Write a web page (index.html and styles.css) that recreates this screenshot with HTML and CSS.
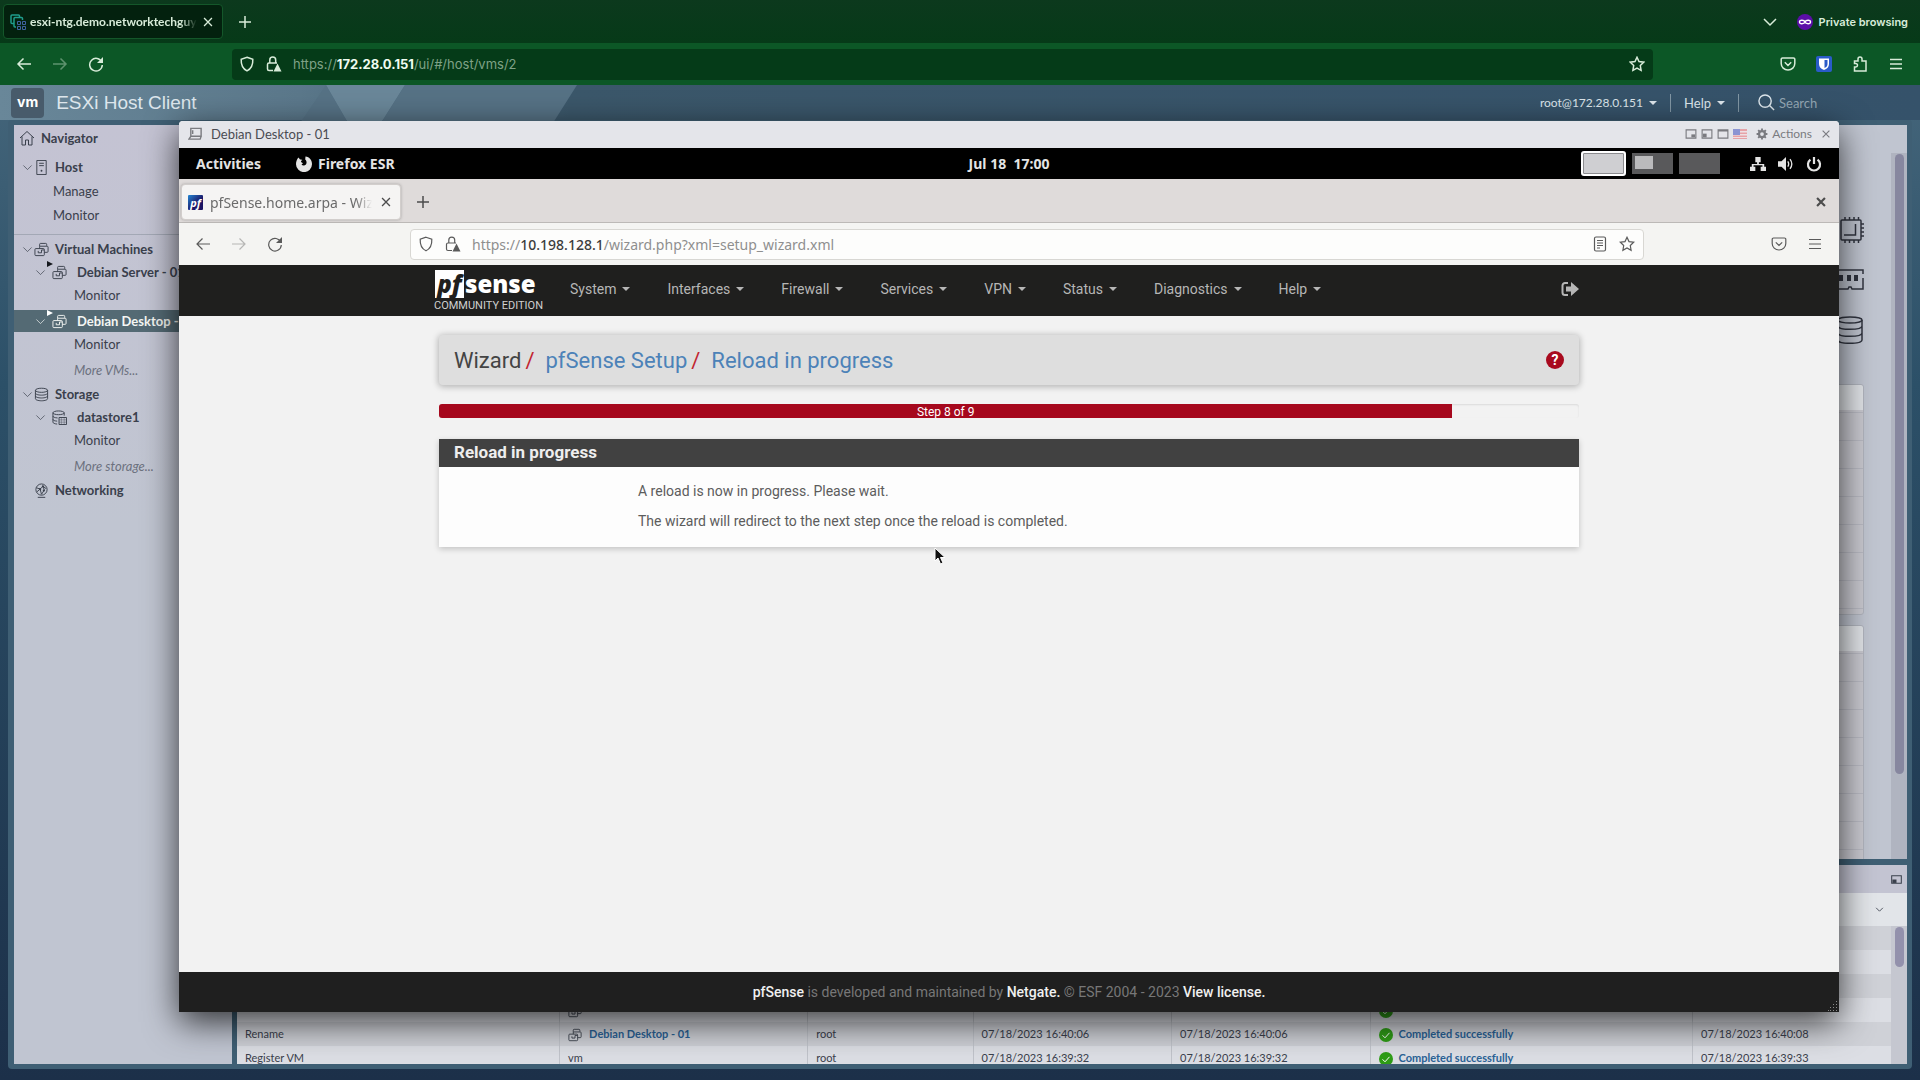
FILE: index.html
```html
<!DOCTYPE html>
<html lang="en">
<head>
    <meta charset="UTF-8">
    <meta name="viewport" content="width=device-width, initial-scale=1.0">
    <title>ESXi Host Client</title>
    <link rel="stylesheet" href="styles.css">
</head>
<body>

    <!-- Shared icons -->
    <svg class="sprite" aria-hidden="true">
        <symbol id="i-back" viewBox="0 0 16 16"><path d="M15 8H2M7.500 2.500L2 8l5.500 5.500"/></symbol>
        <symbol id="i-forward" viewBox="0 0 16 16"><path d="M1 8h13M8.500 2.500L14 8l-5.500 5.500"/></symbol>
        <symbol id="i-reload" viewBox="0 0 16 16"><path d="M13.800 6.200A6.300 6.300 0 1 0 14.300 9"/><path class="solid" d="M15 1v6H9z"/></symbol>
        <symbol id="i-shield" viewBox="0 0 16 16"><path d="M8 1.200l5.800 2c.3 5.600-1.500 9.500-5.800 11.600C3.700 12.700 1.900 8.800 2.200 3.200z"/></symbol>
        <symbol id="i-lock" viewBox="0 0 16 16"><path d="M7 14.500H3a1.500 1.500 0 0 1-1.500-1.500V8.500A1.500 1.500 0 0 1 3 7h8M3.800 7V4a2.900 2.900 0 0 1 5.900 0v3"/><path class="solid" d="M11.500 7.500l4 8h-8z"/></symbol>
        <symbol id="i-star" viewBox="0 0 16 16"><path d="M8 1.300l2 4.300 4.700.6-3.400 3.300.8 4.800L8 12l-4.100 2.300.8-4.800L1.300 6.200l4.700-.6z"/></symbol>
        <symbol id="i-pocket" viewBox="0 0 16 16"><path d="M2.500 2h11a1.300 1.300 0 0 1 1.300 1.300V7.500a6.800 6.500 0 0 1-13.600 0V3.300A1.300 1.300 0 0 1 2.500 2zM4.800 6.300L8 9.500l3.200-3.200"/></symbol>
        <symbol id="i-menu" viewBox="0 0 16 16"><path d="M2 3.500h12M2 8h12M2 12.500h12"/></symbol>
        <symbol id="i-close" viewBox="0 0 16 16"><path d="M3.500 3.500l9 9M12.500 3.500l-9 9"/></symbol>
        <symbol id="i-plus" viewBox="0 0 16 16"><path d="M8 2v12M2 8h12"/></symbol>
        <symbol id="i-down" viewBox="0 0 16 16"><path d="M2 5l6 6 6-6"/></symbol>
        <symbol id="i-puzzle" viewBox="0 0 16 16"><path d="M2.500 15V11h1.300a1.700 1.700 0 0 0 0-3.400H2.500V5H6V3a2 2 0 0 1 4 0v2h4v10z"/></symbol>
        <symbol id="i-vm" viewBox="0 0 16 16"><path d="M6 5V2.500A1 1 0 0 1 7 1.500h5.500a1 1 0 0 1 1 1V4M11 11h3a1 1 0 0 0 1-1V5.500a1 1 0 0 0-1-1H7a1 1 0 0 0-1 1V7M2 7h8a1 1 0 0 1 1 1v5.500a1 1 0 0 1-1 1H2a1 1 0 0 1-1-1V8a1 1 0 0 1 1-1zM4.500 11.500v-2M4.500 11.500H8V8.500h3"/></symbol>
        <symbol id="i-disk" viewBox="0 0 16 16"><ellipse cx="8" cy="3.500" rx="6.500" ry="2.200"/><path d="M1.500 3.500v9c0 1.200 2.900 2.200 6.500 2.200s6.500-1 6.500-2.200v-9M1.500 6.500c0 1.200 2.900 2.200 6.500 2.200s6.500-1 6.500-2.200M1.500 9.500c0 1.200 2.900 2.200 6.500 2.200s6.500-1 6.500-2.200"/></symbol>
        <symbol id="i-ok" viewBox="0 0 14 14"><circle class="ok-disc" cx="7" cy="7" r="7"/><path class="ok-tick" d="M3.500 7.300l2.500 2.500 4.500-5"/></symbol>
    </svg>

    <!-- Host browser -->
    <header class="browser">
        <div class="tab-strip">
            <div class="tab">
                <svg class="icon" viewBox="0 0 16 16"><path class="teal" d="M4 9.500H2a1 1 0 0 1-1-1V2a1 1 0 0 1 1-1h6.500a1 1 0 0 1 1 1v1M6 13H5a1 1 0 0 1-1-1V4.500a1 1 0 0 1 1-1h6.500a1 1 0 0 1 1 1V6"/><path class="blue" d="M7.500 7.500h3v3h-3zM12.500 7.500h3v3h-3zM7.500 12.500h3v3h-3zM12.500 12.500h3v3h-3z"/></svg>
                <span class="tab-title">esxi-ntg.demo.networktechguy.</span>
                <button type="button" aria-label="Close tab"><svg class="icon"><use href="#i-close"/></svg></button>
            </div>
            <button type="button" class="new-tab" aria-label="New tab"><svg class="icon"><use href="#i-plus"/></svg></button>
            <div class="private">
                <button type="button" aria-label="List all tabs"><svg class="icon"><use href="#i-down"/></svg></button>
                <svg class="mask" viewBox="0 0 16 16"><circle cx="8" cy="8" r="8"/><path d="M8 8c-1-2-5.500-2.400-5.500 0S7 10 8 8c1 2 5.500 2.400 5.500 0S9 6 8 8z"/></svg>
                <span>Private browsing</span>
            </div>
        </div>
        <div class="toolbar">
            <div class="nav-buttons">
                <button type="button" aria-label="Back"><svg class="icon"><use href="#i-back"/></svg></button>
                <button type="button" class="dim" aria-label="Forward"><svg class="icon"><use href="#i-forward"/></svg></button>
                <button type="button" aria-label="Reload"><svg class="icon"><use href="#i-reload"/></svg></button>
            </div>
            <div class="address">
                <svg class="icon"><use href="#i-shield"/></svg>
                <svg class="icon"><use href="#i-lock"/></svg>
                <div class="url" role="textbox" aria-label="Address">https://<b>172.28.0.151</b>/ui/#/host/vms/2</div>
                <button type="button" aria-label="Bookmark"><svg class="icon"><use href="#i-star"/></svg></button>
            </div>
            <div class="tool-buttons">
                <button type="button" aria-label="Pocket"><svg class="icon"><use href="#i-pocket"/></svg></button>
                <button type="button" aria-label="Bitwarden"><svg class="icon" viewBox="0 0 16 16"><rect class="bw-box" width="16" height="16" rx="2"/><path class="bw-shield" d="M3 2.500h10V8c0 3-2 4.700-5 6-3-1.300-5-3-5-6z"/><path class="bw-half" d="M8.500 4H11.500v4c0 2-1 3-3 4z"/></svg></button>
                <button type="button" aria-label="Extensions"><svg class="icon"><use href="#i-puzzle"/></svg></button>
                <button type="button" aria-label="Menu"><svg class="icon"><use href="#i-menu"/></svg></button>
            </div>
        </div>
    </header>

    <div class="esxi">
        <div class="esxi-header">
            <svg class="facets" viewBox="0 0 640 38" aria-hidden="true"><path class="facet-light" d="M326 0h79l-24 38h-33z"/><path class="facet-mid" d="M326 0l22 38h-48zM405 0h172l-24 38H381z"/></svg>
            <span class="vm-logo">vm</span>
            <h1>ESXi Host Client</h1>
            <button type="button" class="caret user">root@172.28.0.151</button>
            <button type="button" class="caret">Help</button>
            <label class="search">
                <svg viewBox="0 0 18 18"><circle cx="7.500" cy="7.500" r="6.500"/><path d="M12 12l5 5"/></svg>
                <input type="search" placeholder="Search" aria-label="Search">
            </label>
        </div>

        <div class="workspace">
            <nav class="navigator">
                <h2><svg class="icon" viewBox="0 0 16 16"><path d="M1 8l7-6.500L15 8M3 6.500v8.500h3.500v-5h3v5H13V6.500"/></svg>Navigator</h2>
                <ul>
                    <li class="node"><svg class="arrow"><use href="#i-down"/></svg><svg class="icon" viewBox="0 0 16 16"><path d="M3 .5h10v15H3zM5.500 3.500h5M5.500 6h5"/><circle class="solid" cx="8" cy="11.500" r="1"/></svg>Host</li>
                    <li class="leaf">Manage</li>
                    <li class="leaf">Monitor</li>
                </ul>
                <ul class="divided">
                    <li class="node"><svg class="arrow"><use href="#i-down"/></svg><svg class="icon"><use href="#i-vm"/></svg>Virtual Machines</li>
                    <li class="node sub running"><svg class="arrow"><use href="#i-down"/></svg><svg class="icon"><use href="#i-vm"/></svg>Debian Server - 01</li>
                    <li class="leaf sub">Monitor</li>
                    <li class="node sub running selected"><svg class="arrow"><use href="#i-down"/></svg><svg class="icon"><use href="#i-vm"/></svg>Debian Desktop - 01</li>
                    <li class="leaf sub">Monitor</li>
                    <li class="leaf sub more">More VMs...</li>
                    <li class="node"><svg class="arrow"><use href="#i-down"/></svg><svg class="icon"><use href="#i-disk"/></svg>Storage</li>
                    <li class="node sub"><svg class="arrow"><use href="#i-down"/></svg><svg class="icon" viewBox="0 0 16 16"><ellipse cx="7" cy="3" rx="6" ry="2"/><path d="M1 3v10c0 1 2 1.800 4.500 2M1 6.500c0 1 2 1.800 5 2M1 10c0 1 2 1.700 4.500 1.900M13 3v3M7.500 8h8v7.500h-8z"/><path class="grid-lines" d="M10 8v7.500M13 8v7.500M7.500 10.500h8M7.500 13h8"/></svg>datastore1</li>
                    <li class="leaf sub">Monitor</li>
                    <li class="leaf sub more">More storage...</li>
                    <li class="node"><span class="arrow"></span><svg class="icon" viewBox="0 0 16 16"><circle cx="8" cy="7" r="6"/><path d="M4 15.300h8M2.500 5l4 1.500 3-3L13 6M6.500 6.500L8 12l3-4.500-1.500-4M3 9.500l3.500-3"/><circle class="solid" cx="6.500" cy="6.500" r="1.200"/><circle class="solid" cx="10.500" cy="8" r="1.200"/><circle class="solid" cx="9.500" cy="3.500" r="1.200"/></svg>Networking</li>
                </ul>
            </nav>

            <main class="host">
                <section class="summary">
                    <div class="summary-body">
                        <div class="gauges">
                            <svg viewBox="0 0 26 28"><rect x="3" y="4" width="20" height="20" rx="1"/><path d="M17.500 8v11H6M7 1v3M11.500 1v3M16 1v3M20.500 1v3M7 24v3M11.500 24v3M16 24v3M20.500 24v3M23 8h3M23 12h3M23 16h3M23 20h3"/></svg>
                            <svg viewBox="0 0 26 28"><path d="M0 4h25v4M25 12v11H14l-1-2h-2l-1 2H0"/><path class="solid" d="M1 9h4v6H1zM9 9h4v6H9zM16 9h4v6h-4z"/></svg>
                            <svg viewBox="0 0 26 28"><ellipse cx="12" cy="4" rx="12" ry="3"/><path d="M24 4v20c0 2-5 3.300-12 3.300S0 26 0 24V4M24 10c0 2-5 3.300-12 3.300S0 12 0 10M24 17c0 2-5 3.300-12 3.300S0 19 0 17"/></svg>
                        </div>
                        <div class="card"></div>
                        <div class="card tall"></div>
                    </div>
                    <div class="scroll"><div class="thumb"></div></div>
                </section>
                <section class="tasks">
                    <div class="tasks-title">
                        <button type="button" aria-label="Restore"><svg class="icon" viewBox="0 0 16 16"><path d="M1 2.500h14v11H1z"/><path class="solid" d="M2 8h6v5H2z"/></svg></button>
                    </div>
                    <div class="tasks-filter">
                        <button type="button" aria-label="Column options"><svg class="icon"><use href="#i-down"/></svg></button>
                    </div>
                    <div class="tasks-body">
                        <table>
                            <colgroup><col><col class="c-target"><col class="c-init"><col class="c-time"><col class="c-time"><col class="c-result"><col class="c-time"></colgroup>
                            <tbody>
                                <tr><td></td><td></td><td></td><td></td><td></td><td></td><td></td></tr>
                                <tr><td></td><td></td><td></td><td></td><td></td><td></td><td></td></tr>
                                <tr><td></td><td></td><td></td><td></td><td></td><td></td><td></td></tr>
                                <tr><td></td><td><svg class="icon"><use href="#i-vm"/></svg></td><td></td><td></td><td></td><td><svg class="ok"><use href="#i-ok"/></svg></td><td></td></tr>
                                <tr><td>Rename</td><td><svg class="icon"><use href="#i-vm"/></svg><a href="#">Debian Desktop - 01</a></td><td>root</td><td>07/18/2023 16:40:06</td><td>07/18/2023 16:40:06</td><td><svg class="ok"><use href="#i-ok"/></svg><a href="#">Completed successfully</a></td><td>07/18/2023 16:40:08</td></tr>
                                <tr><td>Register VM</td><td>vm</td><td>root</td><td>07/18/2023 16:39:32</td><td>07/18/2023 16:39:32</td><td><svg class="ok"><use href="#i-ok"/></svg><a href="#">Completed successfully</a></td><td>07/18/2023 16:39:33</td></tr>
                            </tbody>
                        </table>
                        <div class="scroll"><div class="thumb"></div></div>
                    </div>
                </section>
            </main>
        </div>
    </div>

    <!-- Remote console window floating over the host client -->
    <div class="console">
        <div class="console-title">
            <svg class="icon" viewBox="0 0 16 16"><path d="M3 2.500h11v8.500H3zM3 11l-2 3h12l1-3M5 4.500v4"/></svg>
            <span class="console-name">Debian Desktop - 01</span>
            <button type="button" aria-label="Dock right"><svg class="icon" viewBox="0 0 16 16"><path d="M1.500 2.500h13v11h-13z"/><path class="solid" d="M8.500 8.500h5v4h-5z"/></svg></button>
            <button type="button" aria-label="Dock left"><svg class="icon" viewBox="0 0 16 16"><path d="M1.500 2.500h13v11h-13z"/><path class="solid" d="M2.500 7.500h5v5h-5z"/></svg></button>
            <button type="button" aria-label="Maximize"><svg class="icon" viewBox="0 0 16 16"><path d="M1.500 2.500h13v11h-13zM1.500 4h13"/></svg></button>
            <button type="button" class="flag" aria-label="Keyboard layout"><svg viewBox="0 0 14 10"><path class="flag-red" d="M0 0h14v10H0z"/><path class="flag-white" d="M0 2h14v1.500H0zM0 5h14v1.500H0zM0 8h14v1H0z"/><path class="flag-blue" d="M0 0h7v6H0z"/></svg></button>
            <button type="button" class="actions"><svg class="icon" viewBox="0 0 16 16"><circle class="gear" cx="8" cy="8" r="4"/><path class="teeth" d="M8 .8v3M8 12.200v3M.8 8h3M12.200 8h3M2.900 2.900L5 5M11 11l2.100 2.100M2.900 13.100L5 11M11 5l2.100-2.100"/></svg>Actions</button>
            <button type="button" aria-label="Close console"><svg class="icon"><use href="#i-close"/></svg></button>
        </div>

        <div class="gnome-bar">
            <div class="gnome-left">
                <button type="button">Activities</button>
                <button type="button"><svg viewBox="0 0 16 16"><path class="solid" d="M2.500 1.500L4 3.500c1-.3 2 0 2.500.6-1 .4-1.500 1-1.500 1.900l2 1.200-1.500 1.300c1 1.500 3.700 1.300 4.700-.5.800-1.600.2-3.500-1-4.500L9.500.5C13.500 1 16 4.200 16 8a8 8 0 0 1-16 .2C0 5.500 1 3 2.500 1.500z"/></svg>Firefox ESR</button>
            </div>
            <time>Jul 18&nbsp; 17:00</time>
            <div class="gnome-right">
                <span class="desk current"></span><span class="desk"><i></i></span><span class="desk"></span>
                <svg viewBox="0 0 18 18"><path class="solid" d="M6 1h6v6h-2v2h6v3h2v5h-6v-5h2v-1.500H4V12h2v5H0v-5h2V9h6V7H6z"/></svg>
                <svg viewBox="0 0 18 18"><path class="solid" d="M0 6h4l5-5v16l-5-5H0z"/><path d="M11 6c1.200 1.800 1.200 4.200 0 6M13.500 3.500c2.600 3.500 2.600 7.500 0 11"/></svg>
                <svg viewBox="0 0 18 18"><path class="power" d="M5 4a6.800 6.800 0 1 0 8 0M9 1v8"/></svg>
            </div>
        </div>

        <div class="guest-tabs">
            <div class="tab">
                <span class="pf-icon">pf</span>
                <span class="tab-title">pfSense.home.arpa - Wiza</span>
                <button type="button" aria-label="Close tab"><svg class="icon"><use href="#i-close"/></svg></button>
            </div>
            <button type="button" class="new-tab" aria-label="New tab"><svg class="icon"><use href="#i-plus"/></svg></button>
            <button type="button" class="quit" aria-label="Close window"><svg class="icon"><use href="#i-close"/></svg></button>
        </div>

        <div class="toolbar guest">
            <div class="nav-buttons">
                <button type="button" aria-label="Back"><svg class="icon"><use href="#i-back"/></svg></button>
                <button type="button" class="dim" aria-label="Forward"><svg class="icon"><use href="#i-forward"/></svg></button>
                <button type="button" aria-label="Reload"><svg class="icon"><use href="#i-reload"/></svg></button>
            </div>
            <div class="address">
                <svg class="icon"><use href="#i-shield"/></svg>
                <svg class="icon"><use href="#i-lock"/></svg>
                <div class="url" role="textbox" aria-label="Address">https://<b>10.198.128.1</b>/wizard.php?xml=setup_wizard.xml</div>
                <button type="button" aria-label="Reader view"><svg class="icon" viewBox="0 0 16 16"><rect x="2.500" y="1" width="11" height="14" rx="1.500"/><path d="M5 4.500h6M5 7h6M5 9.500h6M5 12h3"/></svg></button>
                <button type="button" aria-label="Bookmark"><svg class="icon"><use href="#i-star"/></svg></button>
            </div>
            <div class="tool-buttons">
                <button type="button" aria-label="Pocket"><svg class="icon"><use href="#i-pocket"/></svg></button>
                <button type="button" aria-label="Menu"><svg class="icon"><use href="#i-menu"/></svg></button>
            </div>
        </div>

        <div class="pfsense">
            <nav class="pf-nav">
                <div class="pf-inner">
                    <a href="#" class="pf-logo">
                        <span class="pf-word"><span class="pf-box">pf</span>sense</span>
                        <span class="pf-edition">COMMUNITY EDITION</span>
                    </a>
                    <button type="button" class="caret">System</button>
                    <button type="button" class="caret">Interfaces</button>
                    <button type="button" class="caret">Firewall</button>
                    <button type="button" class="caret">Services</button>
                    <button type="button" class="caret">VPN</button>
                    <button type="button" class="caret">Status</button>
                    <button type="button" class="caret">Diagnostics</button>
                    <button type="button" class="caret">Help</button>
                    <a href="#" class="logout" aria-label="Logout"><svg viewBox="0 0 18 16"><path d="M7 2H4a2.500 2.500 0 0 0-2.500 2.500v7A2.500 2.500 0 0 0 4 14h3"/><path class="solid" d="M5 5.500h5V1l8 7-8 7v-4.500H5z"/></svg></a>
                </div>
            </nav>

            <div class="pf-content">
                <div class="breadcrumb">
                    <span>Wizard</span><i>/</i><a href="#">pfSense Setup</a><i>/</i><a href="#">Reload in progress</a>
                    <a href="#" class="help" aria-label="Help">?</a>
                </div>
                <div class="progress"><div class="progress-bar" style="width: 88.89%">Step 8 of 9</div></div>
                <section class="panel">
                    <h2>Reload in progress</h2>
                    <div class="panel-body">
                        <p>A reload is now in progress. Please wait.</p>
                        <p>The wizard will redirect to the next step once the reload is completed.</p>
                    </div>
                </section>
            </div>

            <footer><a href="#">pfSense</a> is developed and maintained by <a href="#">Netgate.</a> © ESF 2004 - 2023 <a href="#">View license.</a></footer>
        </div>
        <svg class="grip" viewBox="0 0 10 10"><path d="M8 0h1v1H8zM5 3h1v1H5zM8 3h1v1H8zM2 6h1v1H2zM5 6h1v1H5zM8 6h1v1H8zM0 9h1v1H0zM2 9h1v1H2zM5 9h1v1H5zM8 9h1v1H8z"/></svg>
    </div>

    <svg class="pointer" viewBox="0 0 12 18"><path d="M1 1v13l3-3 2.500 6 2.500-1-2.500-5.500H11z"/></svg>

</body>
</html>
```

FILE: styles.css
```css
* {
    box-sizing: border-box;
}

body {
    margin: 0;
    height: 100vh;
    display: flex;
    flex-direction: column;
    overflow: hidden;
    position: relative;
    background: #1c3049;
    font-family: "Lato", sans-serif;
    font-size: 13px;
    color: #3a404c;
}

button {
    display: flex;
    align-items: center;
    padding: 0;
    border: none;
    background: none;
    color: inherit;
    font: inherit;
    cursor: pointer;
}

a {
    color: inherit;
    text-decoration: none;
}

h1, h2, p, ul {
    margin: 0;
    padding: 0;
}

ul {
    list-style: none;
}

svg {
    flex: none;
    fill: none;
    stroke: currentColor;
    stroke-width: 1.5;
}

.solid {
    fill: currentColor;
    stroke: none;
}

.sprite {
    position: absolute;
    width: 0;
    height: 0;
}

.icon {
    width: 16px;
    height: 16px;
}

/* Host browser chrome */
.browser {
    background: #0c5726;
    color: #d8ecd9;
    font-family: "Inter", sans-serif;
}

.tab-strip {
    display: flex;
    align-items: center;
    height: 43px;
    padding: 0 12px 0 3px;
    background: linear-gradient(#0c391d, #063a18);
}

.tab {
    display: flex;
    align-items: center;
    gap: 4px;
    width: 220px;
    height: 35px;
    padding: 0 7px 0 6px;
    border: 1px solid #14572a;
    border-radius: 4px;
    background: #03210e;
}

.tab .teal {
    stroke: #1f9d8c;
}

.tab .blue {
    stroke: #3f62a0;
    stroke-width: 1;
}

.tab-title {
    flex: 1;
    overflow: hidden;
    white-space: nowrap;
    font: 700 12px "Lato", sans-serif;
    -webkit-mask-image: linear-gradient(to right, #000 90%, transparent);
    mask-image: linear-gradient(to right, #000 90%, transparent);
}

.tab button .icon {
    width: 14px;
    height: 14px;
}

.new-tab {
    margin-left: 14px;
}

.private {
    display: flex;
    align-items: center;
    margin-left: auto;
    font-size: 11px;
    font-weight: 600;
}

.mask {
    width: 16px;
    height: 16px;
    margin: 0 6px 0 19px;
    fill: #5b0fa8;
    stroke: none;
}

.mask path {
    fill: none;
    stroke: #fff;
}

.toolbar {
    display: flex;
    align-items: center;
    height: 42px;
}

.nav-buttons {
    display: flex;
    gap: 20px;
    width: 232px;
    padding-left: 16px;
}

.dim {
    opacity: 0.4;
}

.address {
    flex: 1;
    display: flex;
    align-items: center;
    gap: 11px;
    height: 31px;
    padding: 0 8px 0 7px;
    border-radius: 4px;
    background: #053b18;
}

.url {
    flex: 1;
    color: #7fa287;
    font-size: 13px;
}

.url b {
    color: #f0fbf0;
    font-weight: 700;
}

.tool-buttons {
    display: flex;
    justify-content: flex-end;
    gap: 20px;
    width: 267px;
    padding-right: 16px;
}

.bw-box {
    fill: #2a5bc8;
    stroke: none;
}

.bw-shield {
    fill: #fff;
    stroke: none;
}

.bw-half {
    fill: #2a5bc8;
    stroke: none;
}

/* ESXi host client */
.esxi {
    flex: 1;
    display: flex;
    flex-direction: column;
    min-height: 0;
    padding: 0 8px 11px;
    background: linear-gradient(#44657a, #2c5068 30%, #1c3049);
}

.esxi-header {
    position: relative;
    display: flex;
    align-items: center;
    height: 35px;
    margin: 0 -8px;
    padding: 0 67px 0 11px;
    background: linear-gradient(to right, #698799 0, #5b788b 300px, #3b576a 570px, #35526a);
    color: #dde6ec;
    font-size: 13px;
}

.facets {
    position: absolute;
    top: 0;
    left: 0;
    width: 640px;
    height: 38px;
    stroke: none;
}

.facet-light {
    fill: #6a8799;
}

.facet-mid {
    fill: #567285;
}

.vm-logo {
    padding: 5px 6px 7px;
    border-radius: 4px;
    background: #485b6b;
    color: #fff;
    font: 700 14px/18px "Inter", sans-serif;
    position: relative;
}

.esxi-header h1 {
    flex: 1;
    margin-left: 12px;
    position: relative;
    font: 400 19px "Liberation Sans", sans-serif;
}

.caret::after {
    content: "";
    margin-left: 6px;
    border: 4px solid transparent;
    border-top-color: currentColor;
    border-bottom: none;
}

.esxi-header .caret {
    height: 18px;
    padding: 0 13px;
    border-right: 1px solid #8297a5;
}

.esxi-header .user {
    font-size: 12px;
}

.search {
    display: flex;
    align-items: center;
    gap: 4px;
    margin-left: 19px;
}

.search svg {
    width: 17px;
    height: 17px;
}

.search input {
    width: 74px;
    padding: 0;
    border: none;
    background: none;
    color: inherit;
    font: inherit;
}

.search input::placeholder {
    color: #94a7b4;
}

.workspace {
    flex: 1;
    display: grid;
    grid-template-columns: 218px minmax(0, 1fr);
    grid-template-rows: minmax(0, 1fr);
    gap: 5px;
    min-height: 0;
    padding: 5px 5px 5px 6px;
    border-radius: 4px;
    background: #3f5f74;
}

.navigator {
    background: linear-gradient(to bottom, #c4c3d3, #c0c5d1 400px);
    overflow: hidden;
    white-space: nowrap;
}

.navigator h2 {
    display: flex;
    align-items: center;
    gap: 6px;
    height: 30px;
    padding: 0 0 4px 5px;
    font-size: 13px;
    font-weight: 700;
}

.navigator svg {
    stroke-width: 1;
}

.navigator .grid-lines {
    opacity: 0.4;
}

.navigator .divided {
    margin-top: 7px;
    padding-top: 2px;
    border-top: 1px solid #a3a8b5;
}

.node {
    display: flex;
    align-items: center;
    height: 24px;
    padding-left: 8px;
    font-weight: 700;
    font-size: 13px;
}

.arrow {
    width: 11px;
    height: 11px;
    margin-right: 1px;
}

.node .icon {
    width: 15px;
    height: 15px;
    margin-right: 6px;
}

.node.sub {
    position: relative;
    height: 22px;
    padding-left: 21px;
}

.node.sub .icon {
    margin: 0 10px 0 5px;
}

.running::before {
    content: "";
    position: absolute;
    left: 33px;
    top: 0;
    border: 3px solid transparent;
    border-left: 6px solid #15181d;
    border-right: none;
}

.node.selected {
    margin-top: 3px;
    background: #546a74;
    color: #f4f6f3;
}

.selected::before {
    border-left-color: #fff;
}

.leaf {
    height: 24px;
    padding-left: 39px;
    line-height: 24px;
}

.leaf.sub {
    padding-left: 60px;
}

.leaf.more {
    margin-top: 2px;
    color: #6c717e;
    font-style: italic;
}

.host {
    display: flex;
    flex-direction: column;
    gap: 6px;
    min-width: 0;
    min-height: 0;
}

.summary {
    flex: 1;
    display: flex;
    min-height: 0;
    padding-top: 28px;
    background: #c0c5d0;
}

.summary-body {
    flex: 1;
    display: flex;
    flex-direction: column;
    overflow: hidden;
    padding: 63px 27px 0 12px;
}

.gauges {
    display: flex;
    flex-direction: column;
    align-items: flex-end;
    gap: 22px;
    margin-bottom: 40px;
    color: #30343f;
}

.gauges svg {
    width: 26px;
    height: 28px;
}

.card {
    flex: none;
    height: 231px;
    margin-bottom: 10px;
    border: 1px solid #b0b4bd;
    border-radius: 3px;
    background: linear-gradient(#e0e3e7 25px, transparent 25px), repeating-linear-gradient(#c9c9d0 0 27px, #b9bac3 27px 28px);
}

.card.tall {
    height: 280px;
}

.scroll {
    width: 16px;
    padding: 1px 3px 0 4px;
    background: #b0b4c0;
}

.thumb {
    height: 620px;
    border-radius: 5px;
    background: #87879f;
}

.tasks .thumb {
    height: 40px;
    background: #9391ac;
}

.tasks-title {
    display: flex;
    justify-content: flex-end;
    height: 28px;
    padding-right: 5px;
    background: #c3c4d2;
}

.tasks-title .icon {
    width: 11px;
    height: 11px;
}

.tasks-filter {
    display: flex;
    justify-content: flex-end;
    height: 33px;
    padding-right: 23px;
    background: #e2e5e9;
}

.tasks-filter .icon {
    width: 9px;
    height: 9px;
}

.tasks-body {
    display: flex;
    height: 138px;
    overflow: hidden;
}

.tasks-body .scroll {
    background: #c5c7d0;
}

table {
    flex: 1;
    height: 144px;
    border-collapse: collapse;
    table-layout: fixed;
    font-size: 11px;
}

tr {
    height: 24px;
    background: #dcdee4;
}

tr:nth-child(odd) {
    background: #cfd1d7;
}

td {
    height: 24px;
    padding: 0 8px;
    border-right: 1px solid #c0c3ca;
    line-height: 16px;
    white-space: nowrap;
}

td:last-child {
    border-right: none;
}

td a {
    color: #2a6296;
    font-weight: 700;
}

td svg {
    width: 14px;
    height: 14px;
    margin-right: 6px;
    vertical-align: middle;
    stroke-width: 1;
}

td .icon {
    width: 14px;
    height: 14px;
    margin-right: 7px;
}

.ok-disc {
    fill: #2f9d17;
    stroke: none;
}

.ok-tick {
    stroke: #fff;
}

.c-target {
    width: 15%;
}

.c-init {
    width: 10%;
}

.c-time {
    width: 12%;
}

.c-result {
    width: 19.5%;
}

/* Remote console window */
.console {
    position: absolute;
    top: 121px;
    right: 81px;
    bottom: 68px;
    left: 179px;
    display: flex;
    flex-direction: column;
    border-radius: 4px 4px 0 0;
    background: #f2f2f2;
    box-shadow: 0 10px 34px rgba(0, 0, 0, 0.75);
}

.console-title {
    display: flex;
    align-items: center;
    gap: 4px;
    height: 27px;
    padding: 0 7px 2px 9px;
    border-radius: 4px 4px 0 0;
    background: #e4e5ea;
    color: #7a7b80;
    font-size: 12px;
}

.console-title .icon {
    width: 12px;
    height: 12px;
}

.console-title > .icon {
    width: 15px;
    height: 15px;
    margin-right: 4px;
}

.console-name {
    flex: 1;
    color: #4a4b52;
    font-size: 13px;
}

.flag svg {
    width: 14px;
    height: 10px;
    stroke: none;
    opacity: 0.7;
}

.flag-red {
    fill: #e8888c;
}

.flag-white {
    fill: #f3dfe2;
}

.flag-blue {
    fill: #6673c8;
}

.actions {
    gap: 4px;
    margin: 0 4px 0 5px;
}

.gear {
    stroke-width: 3;
}

.teeth {
    stroke-width: 2.5;
}

.gnome-bar {
    display: grid;
    grid-template-columns: 1fr auto 1fr;
    align-items: center;
    height: 31px;
    padding: 0 17px;
    background: #000;
    color: #e4e4e4;
    font-family: "Noto Sans", sans-serif;
    font-size: 14px;
    font-weight: 700;
}

.gnome-left, .gnome-right {
    display: flex;
    align-items: center;
}

.gnome-left {
    gap: 35px;
}

.gnome-left button {
    gap: 6px;
}

.gnome-bar svg {
    width: 16px;
    height: 16px;
}

.gnome-right {
    justify-content: flex-end;
    gap: 12px;
}

.desk {
    width: 41px;
    height: 21px;
    margin-right: -6px;
    padding: 3px;
    background: #59595b;
}

.desk i {
    display: block;
    width: 18px;
    height: 13px;
    background: #bababc;
}

.desk:nth-child(3) {
    margin-right: 18px;
}

.desk.current {
    width: 45px;
    height: 25px;
    border: 2px solid #fff;
    border-radius: 3px;
    background: #cfcfd2;
    box-shadow: inset 0 0 0 1px #8c8c8f;
}

.power {
    stroke-width: 2.5;
}

.guest-tabs {
    display: flex;
    align-items: center;
    height: 44px;
    padding: 3px 11px 0 2px;
    border-bottom: 1px solid #bcb9b7;
    background: #dfdbda;
    color: #4c4c4c;
}

.guest-tabs .tab {
    gap: 7px;
    height: 36px;
    border-color: #d2cecc;
    background: #f5f4f3;
    box-shadow: 0 0 3px rgba(0, 0, 0, 0.25);
}

.guest-tabs .tab-title {
    color: #6b6b6b;
    font: 400 14px "Noto Sans", sans-serif;
}

.guest-tabs .quit {
    margin-left: auto;
}

.quit .icon {
    width: 14px;
    height: 14px;
    stroke-width: 2.5;
}

.pf-icon {
    width: 15px;
    border-radius: 1px;
    background: linear-gradient(135deg, #2387d4, #1c1464 60%);
    color: #fff;
    text-align: center;
    font: italic 700 11px/15px "Open Sans", sans-serif;
}

.toolbar.guest {
    background: #f4f4f2;
    color: #5a5a5a;
    font-family: "Noto Sans", sans-serif;
}

.guest svg {
    stroke-width: 1.2;
}

.guest .nav-buttons {
    width: 231px;
}

.guest .address {
    border: 1px solid #d8d7d3;
    background: #fdfdfc;
}

.guest .url {
    color: #8f8f8f;
    font-size: 14px;
}

.guest .url b {
    color: #3c3c3c;
    font-weight: 500;
}

.guest .tool-buttons {
    width: 195px;
}

/* pfSense web interface */
.pfsense {
    flex: 1;
    display: flex;
    flex-direction: column;
    font-family: "Roboto", sans-serif;
    font-size: 14px;
    color: #5c5c5c;
}

.pf-nav {
    background: #1f1f1e;
    color: #b6b6b6;
}

.pf-inner {
    display: flex;
    align-items: center;
    gap: 37px;
    max-width: 1150px;
    height: 51px;
    margin: 0 auto;
    padding-bottom: 3px;
}

.pf-logo {
    width: 106px;
    margin-right: -7px;
    padding-top: 4px;
    color: #fff;
}

.pf-word {
    display: flex;
    align-items: center;
    padding-left: 1px;
    font: 800 24px/28px "Open Sans", sans-serif;
}

.pf-box {
    width: 29px;
    height: 28px;
    margin-right: 1px;
    background: #fff;
    color: #1f1f1e;
    text-align: center;
    font-style: italic;
    font-size: 24px;
}

.pf-edition {
    display: block;
    margin-top: 1px;
    color: #d0d0d0;
    font-size: 11px;
    line-height: 13px;
    white-space: nowrap;
}

.logout {
    display: flex;
    margin: 0 5px 0 auto;
}

.logout svg {
    width: 18px;
    height: 16px;
    stroke-width: 2;
}

.pf-content {
    flex: 1;
    width: 100%;
    max-width: 1140px;
    margin: 0 auto;
    padding-top: 19px;
}

.breadcrumb {
    display: flex;
    align-items: center;
    height: 50px;
    padding: 0 15px;
    border-radius: 4px;
    background: #dedede;
    box-shadow: 0 1px 6px 1px rgba(0, 0, 0, 0.25);
    color: #444;
    font-size: 22px;
}

.breadcrumb a {
    color: #4c82b8;
}

.breadcrumb i {
    margin: 0 11px 0 4px;
    color: #c22530;
    font-style: normal;
}

.breadcrumb .help {
    width: 18px;
    margin-left: auto;
    border-radius: 50%;
    background: #a80a1e;
    color: #fff;
    text-align: center;
    font-size: 14px;
    font-weight: 700;
    line-height: 18px;
}

.progress {
    height: 14px;
    margin-top: 19px;
    border-radius: 3px;
    overflow: hidden;
    box-shadow: inset 0 1px 2px rgba(0, 0, 0, 0.1);
}

.progress-bar {
    height: 14px;
    background: #a6081d;
    color: #fff;
    text-align: center;
    font-size: 12px;
    line-height: 16px;
}

.panel {
    margin-top: 21px;
    background: #fdfdfd;
    box-shadow: 0 2px 6px rgba(0, 0, 0, 0.2);
}

.panel h2 {
    padding: 0 15px 1px;
    background: #414141;
    color: #eee;
    font-size: 17px;
    font-weight: 700;
    line-height: 27px;
}

.panel-body {
    padding: 14px 0 16px 199px;
    line-height: 20px;
}

.panel-body p + p {
    margin-top: 10px;
}

footer {
    height: 40px;
    background: #1f1f1f;
    color: #777;
    text-align: center;
    line-height: 40px;
}

footer a {
    color: #f0f0f0;
    font-weight: 500;
}

.grip {
    position: absolute;
    right: 1px;
    bottom: 1px;
    width: 10px;
    height: 10px;
    fill: #8a8a8a;
    stroke: none;
}

.pointer {
    position: absolute;
    top: 547px;
    left: 934px;
    width: 12px;
    height: 18px;
    fill: #111;
    stroke: #fff;
    stroke-width: 1;
}
```
